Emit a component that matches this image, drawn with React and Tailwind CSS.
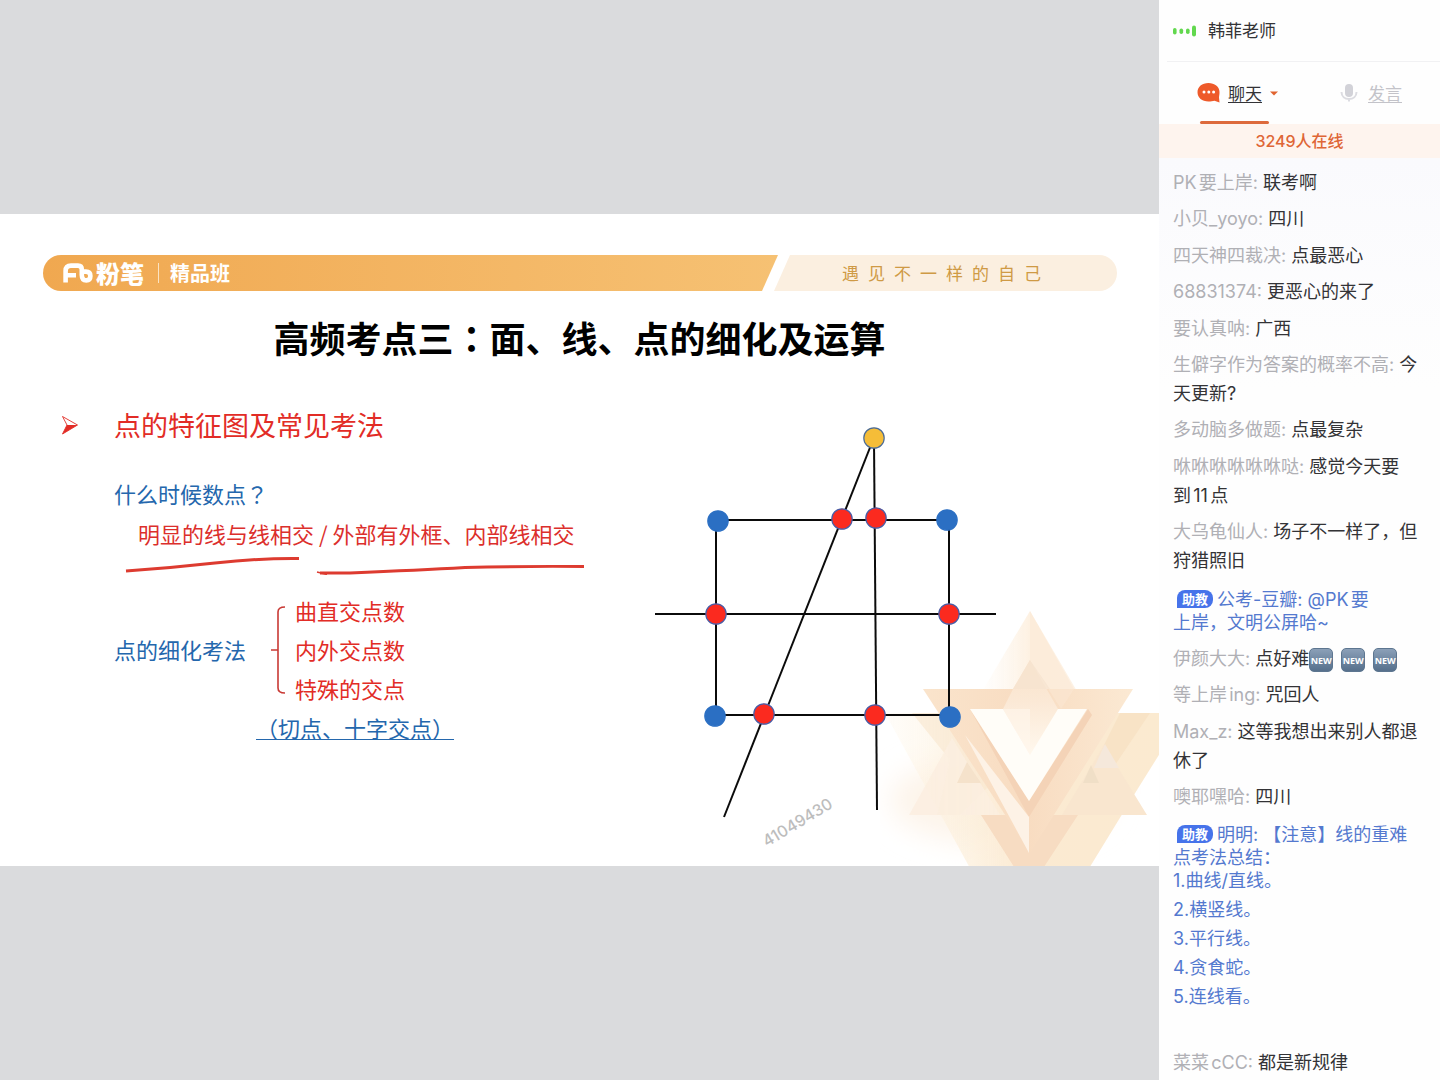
function Punct({ children }) {
  return <span lang="zh-TW" className="font-['Noto_Sans_CJK_TC',sans-serif]">{children}</span>;
}

function BrandLogo() {
  return (
    <svg viewBox="0 0 30 20" className="h-5 w-[30px]" fill="none" stroke="white" aria-hidden="true">
      <path d="M2.6 19.5V8Q2.6 2.6 8 2.6H15Q18.8 2.6 18.8 6.4V12Q18.8 17.4 23.4 17.4Q27.4 17.4 27.4 13Q27.4 8.6 23 8.6H21" strokeWidth="4.6" />
      <path d="M3 12.2H13" strokeWidth="4.4" />
    </svg>
  );
}

function SlideHeader() {
  return (
    <header className="mt-[41px] mr-[42px] ml-[43px] flex h-9 items-stretch">
      <div className="flex grow items-center rounded-l-full bg-gradient-to-r from-[#f0a850] to-[#f6c173] pl-5 text-white [clip-path:polygon(0_0,100%_0,calc(100%-16px)_100%,0_100%)]">
        <BrandLogo />
        <span className="ml-[3px] text-2xl leading-9 font-black">粉笔</span>
        <span className="ml-[14px] h-5 w-px bg-[#fbe3c2]" />
        <span className="ml-[11px] text-xl leading-9 font-bold">精品班</span>
      </div>
      <div className="-ml-1 flex w-[343px] shrink-0 items-center rounded-r-full bg-[#fbefe0] pl-[68px] text-[17px] leading-[34px] tracking-[9px] text-[#cf9a45] [clip-path:polygon(16px_0,100%_0,100%_100%,0_100%)]">
        遇见不一样的自己
      </div>
    </header>
  );
}

function Crystal() {
  return (
    <svg viewBox="880 606 279 260" className="absolute right-0 bottom-0 h-[260px] w-[279px]" aria-hidden="true">
      <defs>
        <linearGradient id="peak" x1="0" x2="1">
          <stop offset="0.1" stopColor="#fef5ea" stopOpacity="0.1" />
          <stop offset="0.5" stopColor="#fdf1e2" />
          <stop offset="1" stopColor="#fdf2e5" />
        </linearGradient>
        <linearGradient id="wing" x1="0" x2="1">
          <stop offset="0" stopColor="#fef4e2" stopOpacity="0.2" />
          <stop offset="0.5" stopColor="#fbead2" />
          <stop offset="1" stopColor="#fbead0" />
        </linearGradient>
        <linearGradient id="core" x1="0" x2="0" y1="0" y2="1">
          <stop offset="0" stopColor="#f9e2ca" />
          <stop offset="0.45" stopColor="#fbe9d6" />
          <stop offset="1" stopColor="#fff8ee" />
        </linearGradient>
        <linearGradient id="rim" x1="0" x2="1">
          <stop offset="0" stopColor="#fae4cc" />
          <stop offset="0.5" stopColor="#f8dcc1" />
          <stop offset="1" stopColor="#fbe9d3" />
        </linearGradient>
        <filter id="haze" x="-50%" y="-50%" width="200%" height="200%">
          <feGaussianBlur stdDeviation="14" />
        </filter>
        <filter id="soft">
          <feGaussianBlur stdDeviation="0.7" />
        </filter>
      </defs>
      <ellipse cx="1000" cy="800" rx="110" ry="45" fill="#fdf4ea" filter="url(#haze)" />
      <g filter="url(#soft)">
        <path d="M1030 611L1088 710H971Z" fill="url(#peak)" />
        <path d="M885 713H1162V750L1137 790L1088 870H971Z" fill="url(#wing)" />
        <path d="M912 713H950L990 785L960 815H937L950 760Z" fill="#f9e6cd" opacity="0.6" />
        <path d="M952 738L1000 815H909Z" fill="#fcefe1" opacity="0.85" />
        <path d="M967 762L981 783H957Z" fill="#f5e2cb" />
        <path d="M1120 713H1150L1115 765L1104 745Z" fill="#f8e3c6" />
        <path d="M1104 745L1147 815H1062Z" fill="#f9e6cf" />
        <path d="M1105 744L1119 768H1094Z" fill="#f5e8db" />
        <path d="M1091 765L1099 783H1083Z" fill="#f0dfc7" />
        <path d="M981 815H1078L1042 870H1016Z" fill="#f7dcc2" />
        <path d="M923 689H1133L1030 853Z" fill="url(#rim)" />
        <path d="M970 709L1029 801L1088 709L1092 715L1029 817Z" fill="#f4d3b7" />
        <path d="M970 709H1087L1029 801Z" fill="#fffdf8" />
        <path d="M965 735L1029 817V853Z" fill="#fdf2e6" />
        <path d="M1030 660L1058 709L1030 755L1003 709L1013 689Z" fill="url(#core)" />
        <path d="M1003 709H1030V755Z" fill="#fff6ec" opacity="0.6" />
        <path d="M1030 611L1074 689L1061 709L1030 660Z" fill="#fbe8d4" opacity="0.55" />
        <path d="M1013 689L1030 660L1050 689Z" fill="#f6e3cf" opacity="0.8" />
      </g>
    </svg>
  );
}

const LINES = [
  [717, 520, 948, 520],
  [716, 520, 716, 716],
  [949, 520, 949, 716],
  [714, 715, 950, 715],
  [655, 614, 996, 614],
  [873, 440, 724, 817],
  [874, 440, 877, 810],
];
const DOTS = [
  [718, 521, "#2b6fc3", "#2b6fc3"],
  [947, 520, "#2b6fc3", "#2b6fc3"],
  [715, 716, "#2b6fc3", "#2b6fc3"],
  [950, 717, "#2b6fc3", "#2b6fc3"],
  [842, 519, "#fb2a1f", "#4a5ca5"],
  [876, 518, "#fb2a1f", "#4a5ca5"],
  [716, 614, "#fb2a1f", "#4a5ca5"],
  [949, 614, "#fb2a1f", "#4a5ca5"],
  [764, 714, "#fb2a1f", "#4a5ca5"],
  [875, 715, "#fb2a1f", "#4a5ca5"],
  [874, 438, "#f5bd38", "#4c6b94"],
];

function Diagram() {
  return (
    <svg viewBox="654 427 344 392" className="h-[392px] w-[344px]" role="img" aria-label="交点图">
      {LINES.map(([x1, y1, x2, y2], i) => (
        <line key={i} x1={x1} y1={y1} x2={x2} y2={y2} stroke="#0b0b0b" strokeWidth="2" />
      ))}
      {DOTS.map(([cx, cy, fill, stroke], i) => (
        <circle key={i} cx={cx} cy={cy} r="10.2" fill={fill} stroke={stroke} strokeWidth="1.2" />
      ))}
    </svg>
  );
}

function Notes() {
  return (
    <section className="min-w-0 grow pt-[41px] text-[22px]">
      <h2 className="flex items-center pl-[61px] text-[27px] leading-10 text-[#e22c26]">
        <svg viewBox="0 0 18 20" className="h-5 w-[18px]" aria-hidden="true">
          <path d="M1.5 1.5L16.5 10L1.5 19L6 10Z" fill="none" stroke="#e22c26" strokeWidth="0.9" />
          <path d="M6 10H16.5L1.5 19Z" fill="#e22c26" />
        </svg>
        <span className="ml-[35px]">点的特征图及常见考法</span>
      </h2>
      <p className="mt-7 pl-[114px] leading-10 text-[#2467ad]">
        什么时候数点<Punct>？</Punct>
      </p>
      <p className="pl-[138px] leading-10 whitespace-nowrap text-[#dc2f2c]">
        明显的线与线相交 / 外部有外框、内部线相交
      </p>
      <svg viewBox="120 555 470 20" className="mt-[2px] ml-[120px] h-5 w-[470px]" fill="none" stroke="#dd3b30" strokeWidth="3" aria-hidden="true">
        <path d="M126 571Q170 568 215 563Q262 558 299 558.5" />
        <path d="M320 573L350 573Q420 570 465 567.5Q520 566 584 566.5" />
        <path d="M317 572L327 574.5" strokeWidth="1.5" />
      </svg>
      <div className="mt-4 flex items-center pl-[114px] leading-[39px]">
        <span className="text-[#2467ad]">点的细化考法</span>
        <svg viewBox="0 0 14 90" className="ml-[25px] h-[90px] w-[14px]" fill="none" stroke="#c93a35" strokeWidth="1.6" aria-hidden="true">
          <path d="M14 2Q7 2 7 7V83Q7 88 14 88M0 45H7" />
        </svg>
        <ul className="ml-[10px] text-[#e22c26]">
          <li>曲直交点数</li>
          <li>内外交点数</li>
          <li>特殊的交点</li>
        </ul>
      </div>
      <p className="pl-[256px] leading-[39px] text-[#2467ad]">
        <span className="underline decoration-1 underline-offset-2">（切点、十字交点）</span>
      </p>
    </section>
  );
}

function Slide() {
  return (
    <article className="relative flex aspect-video w-full flex-col overflow-hidden bg-white">
      <Crystal />
      <SlideHeader />
      <h1 className="mt-[19px] text-center text-4xl leading-[54px] font-bold text-black">
        高频考点三<Punct>：</Punct>面、线、点的细化及运算
      </h1>
      <div className="relative flex grow items-start">
        <Notes />
        <div className="relative mt-[63px] mr-[161px] shrink-0">
          <Diagram />
          <span className="absolute top-[383px] left-[104px] -rotate-[31deg] font-['Inter',sans-serif] text-base font-medium text-[#bdbdbd]">
            41049430
          </span>
        </div>
      </div>
    </article>
  );
}

function Tag() {
  return (
    <span className="mr-1 ml-1 inline-block rounded-lg rounded-bl-none bg-[#4673ea] px-[5px] align-[2px] text-[13px] leading-[18px] font-bold text-white">
      助教
    </span>
  );
}

function NewBadge() {
  return (
    <span className="mr-2 inline-flex h-6 w-6 items-center justify-center rounded-[5px] border border-[#5d7690] bg-gradient-to-b from-[#8ba0b8] to-[#56708c] align-middle font-['Open_Sans',sans-serif] text-[9px] leading-none font-bold text-white">
      NEW
    </span>
  );
}

function Message({ name, children }) {
  return (
    <li>
      <span className="text-[#b0b0b5]">{name}: </span>
      {children}
    </li>
  );
}

function Sidebar() {
  return (
    <aside className="flex h-full w-[281px] shrink-0 flex-col bg-[#fefefe] font-['Inter','Noto_Sans_CJK_SC',sans-serif] text-[#333336]">
      <div className="ml-2 flex h-[62px] items-center border-b border-[#f1f1f3] pl-[6px]">
        <svg viewBox="0 0 24 12" className="h-3 w-6" fill="#62d84e" aria-hidden="true">
          <rect x="0" y="3" width="3.6" height="6.5" rx="1.8" />
          <rect x="6.5" y="3.5" width="3.6" height="5.5" rx="1.8" />
          <rect x="13" y="3.5" width="3.6" height="5.5" rx="1.8" />
          <rect x="19" y="0.5" width="4" height="11" rx="2" />
        </svg>
        <span className="ml-[11px] pt-[3px] text-[17px]">韩菲老师</span>
      </div>
      <nav className="flex h-[62px] justify-between pr-[38px] pl-[38px] text-[17px]">
        <button type="button" className="relative flex items-center">
          <svg viewBox="0 0 24 22" className="h-[22px] w-6" aria-hidden="true">
            <path d="M11.5 1C17.5 1 22.5 4.6 22.5 10C22.5 13 22 14 22 15.5L22.5 20.5L17.5 18.8C15.7 19.4 13.8 19.5 11.5 19.5C5 19.5 0.5 15.5 0.5 10.2C0.5 4.8 5 1 11.5 1Z" fill="#ee5a2a" />
            <circle cx="7" cy="10" r="1.5" fill="#fff" />
            <circle cx="11.8" cy="10" r="1.5" fill="#fff" />
            <circle cx="16.6" cy="10" r="1.5" fill="#fff" />
          </svg>
          <span className="ml-[7px] pt-[3px] underline decoration-1 underline-offset-2">聊天</span>
          <svg viewBox="0 0 8 5" className="ml-2 h-[5px] w-2" aria-hidden="true">
            <path d="M0 0.5H8L4 4.5Z" fill="#e0632f" />
          </svg>
          <span className="absolute bottom-0 left-[3px] h-[3px] w-[69px] rounded-full bg-[#dd6a3c]" />
        </button>
        <button type="button" className="flex items-center text-[#c3c3c9]">
          <svg viewBox="0 0 18 20" className="h-5 w-[18px]" fill="none" aria-hidden="true">
            <rect x="5" y="1" width="8" height="13" rx="4" fill="#d2d2d8" />
            <path d="M1.5 9C1.5 13.5 5 16 9 16S16.5 13.5 16.5 9M9 16V18.5" stroke="#dcdce1" strokeWidth="2" />
          </svg>
          <span className="ml-[10px] pt-[3px] underline decoration-1 underline-offset-2">发言</span>
        </button>
      </nav>
      <p className="bg-[#fef4ee] text-center text-base leading-[34px] font-medium text-[#df6636]">3249人在线</p>
      <ul className="flex grow flex-col justify-between bg-gradient-to-b from-[#fafafd] to-[#fefefe] to-25% pt-[10px] pr-3 pb-[3px] pl-[14px] text-lg leading-[29px] whitespace-nowrap [text-autospace:normal]">
        <Message name="PK要上岸">联考啊</Message>
        <Message name="小贝_yoyo">四川</Message>
        <Message name="四天神四裁决">点最恶心</Message>
        <Message name="68831374">更恶心的来了</Message>
        <Message name="要认真呐">广西</Message>
        <Message name="生僻字作为答案的概率不高">今<br />天更新?</Message>
        <Message name="多动脑多做题">点最复杂</Message>
        <Message name="咻咻咻咻咻咻哒">感觉今天要<br />到11点</Message>
        <Message name="大乌龟仙人">场子不一样了，但<br />狩猎照旧</Message>
        <li className="pt-[5px] pb-[3px] leading-[23px] text-[#5479cf]">
          <Tag />公考-豆瓣: @PK要<br />上岸，文明公屏哈~
        </li>
        <Message name="伊颜大大">点好难<NewBadge /><NewBadge /><NewBadge /></Message>
        <Message name="等上岸ing">咒回人</Message>
        <Message name="Max_z">这等我想出来别人都退<br />休了</Message>
        <Message name="噢耶嘿哈">四川</Message>
        <li className="pt-[5px] pb-[29px] text-[#5479cf]">
          <p className="pb-[3px] leading-[23px]">
            <Tag />明明: 【注意】线的重难<br />点考法总结：<br />1.曲线/直线。
          </p>
          <p>2.横竖线。</p>
          <p>3.平行线。</p>
          <p>4.贪食蛇。</p>
          <p>5.连线看。</p>
        </li>
        <Message name="菜菜cCC">都是新规律</Message>
      </ul>
    </aside>
  );
}

export default function App() {
  return (
    <div className="flex h-screen overflow-hidden bg-[#dadbdd]">
      <main lang="zh-CN" className="flex min-w-0 grow flex-col justify-center font-['Noto_Sans_CJK_SC',sans-serif]">
        <Slide />
      </main>
      <Sidebar />
    </div>
  );
}
